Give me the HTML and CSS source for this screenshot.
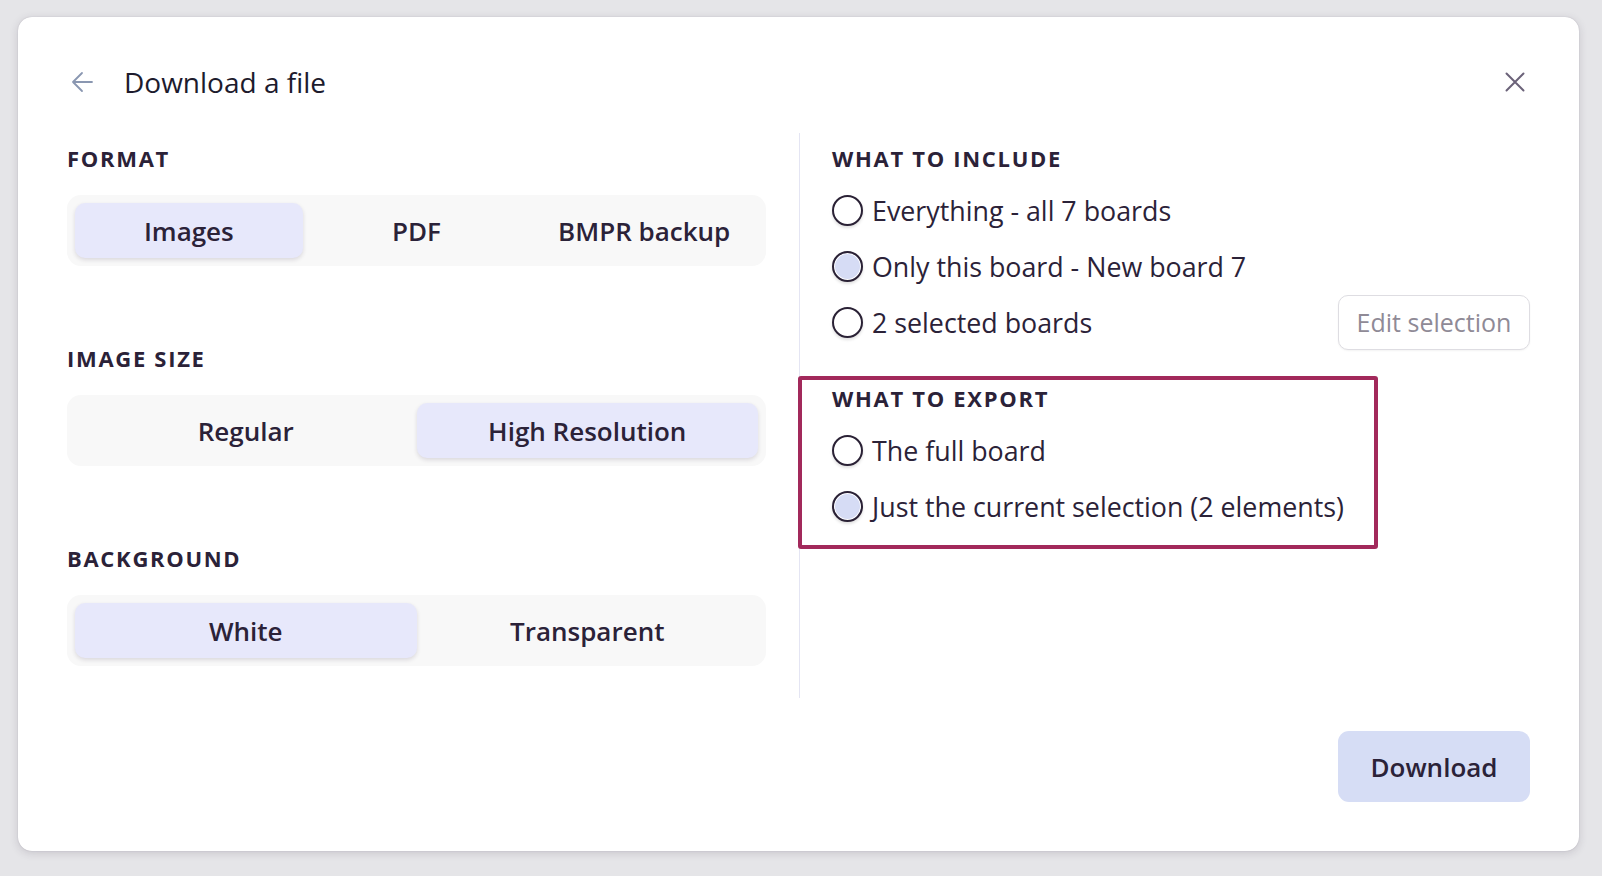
FILE: index.html
```html
<!DOCTYPE html>
<html lang="en">
<head>
<meta charset="utf-8">
<title>Download a file</title>
<link rel="stylesheet" href="styles.css">
</head>
<body>
<div class="dialog">
  <header class="dialog-header">
    <button class="icon-btn back" aria-label="Back">
      <svg width="22" height="22" viewBox="0 0 22 22" fill="none" stroke="currentColor" stroke-width="1.8" stroke-linecap="round" stroke-linejoin="round"><path d="M21 11H2M11 2L2 11l9 9"/></svg>
    </button>
    <h1 class="title">Download a file</h1>
    <button class="icon-btn close" aria-label="Close">
      <svg width="20" height="20" viewBox="0 0 20 20" fill="none" stroke="currentColor" stroke-width="2" stroke-linecap="round"><path d="M1.5 1.5l17 17M18.5 1.5l-17 17"/></svg>
    </button>
  </header>

  <div class="dialog-body">
    <div class="column">
      <section class="group">
        <h2 class="label">Format</h2>
        <div class="segmented three">
          <button class="seg active">Images</button>
          <button class="seg">PDF</button>
          <button class="seg">BMPR backup</button>
        </div>
      </section>
      <section class="group">
        <h2 class="label">Image size</h2>
        <div class="segmented two">
          <button class="seg">Regular</button>
          <button class="seg active">High Resolution</button>
        </div>
      </section>
      <section class="group">
        <h2 class="label">Background</h2>
        <div class="segmented two">
          <button class="seg active">White</button>
          <button class="seg">Transparent</button>
        </div>
      </section>
    </div>

    <div class="divider"></div>

    <div class="column">
      <section class="options">
        <h2 class="label">What to include</h2>
        <label class="radio-row"><span class="radio"></span><span>Everything - all 7 boards</span></label>
        <label class="radio-row"><span class="radio checked"></span><span>Only this board - New board 7</span></label>
        <div class="radio-row">
          <label class="radio-label"><span class="radio"></span><span>2 selected boards</span></label>
          <button class="ghost-btn">Edit selection</button>
        </div>
      </section>
      <section class="options export">
        <div class="highlight"></div>
        <h2 class="label">What to export</h2>
        <label class="radio-row"><span class="radio"></span><span>The full board</span></label>
        <label class="radio-row"><span class="radio checked"></span><span>Just the current selection (2 elements)</span></label>
      </section>
    </div>
  </div>

  <footer class="dialog-footer">
    <button class="primary-btn">Download</button>
  </footer>
</div>
</body>
</html>
```

FILE: styles.css
```css
* { box-sizing: border-box; }

html, body {
  margin: 0;
  padding: 0;
}

body {
  background: #e5e5e8;
  font-family: "Open Sans", "Noto Sans", sans-serif;
  color: #2b2238;
  width: 1602px;
  height: 876px;
  padding: 17px 23px 25px 18px;
}

button {
  font-family: inherit;
  color: inherit;
  border: none;
  background: none;
  padding: 0;
  cursor: pointer;
}

.dialog {
  width: 1561px;
  height: 834px;
  background: #ffffff;
  border-radius: 14px;
  box-shadow: 0 2px 8px rgba(60, 50, 70, 0.18), 0 0 1px rgba(60, 50, 70, 0.3);
  padding: 45px 49px 49px 49px;
  display: flex;
  flex-direction: column;
}

/* header */
.dialog-header {
  display: flex;
  align-items: center;
  height: 40px;
}

.icon-btn {
  display: flex;
  align-items: center;
  justify-content: center;
}

.back {
  color: #8a97b1;
  margin-left: 4px;
  width: 22px;
  height: 22px;
}

.close {
  color: #6b6279;
  margin-left: auto;
  margin-right: 5px;
  width: 20px;
  height: 20px;
}

.title {
  margin: 0 0 0 31px;
  font-size: 28px;
  font-weight: 500;
  color: #1d1b2d;
}

/* body */
.dialog-body {
  margin-top: 31px;
  display: grid;
  grid-template-columns: 699px 1px 698px;
  column-gap: 32.5px;
  height: 565px;
}

.divider {
  background: #e4e5f3;
  width: 1px;
}

.column {
  padding-top: 11px;
  display: flex;
  flex-direction: column;
}

.label {
  margin: 0;
  font-size: 22px;
  line-height: 28px;
  font-weight: 700;
  letter-spacing: 1.7px;
  text-transform: uppercase;
  color: #2b2238;
}

/* segmented controls */
.group {
  margin-bottom: 78px;
}

.group:last-child {
  margin-bottom: 0;
}

.group .label {
  margin-bottom: 23px;
}

.segmented {
  display: grid;
  background: #f8f8f8;
  border-radius: 14px;
  padding: 8px;
  height: 71px;
}

.segmented.three { grid-template-columns: repeat(3, 1fr); }
.segmented.two { grid-template-columns: repeat(2, 1fr); }

.seg {
  font-size: 26px;
  font-weight: 600;
  border-radius: 10px;
  color: #2b2238;
}

.seg.active {
  background: #e7e8fb;
  box-shadow: 0 2px 4px rgba(40, 30, 60, 0.14);
}

/* radio lists */
.options .label {
  margin-bottom: 16px;
}

.radio-row {
  display: flex;
  align-items: center;
  gap: 9px;
  height: 44px;
  margin-bottom: 12px;
  font-size: 26.8px;
  color: #2b2238;
}

.radio-label {
  display: flex;
  align-items: center;
  gap: 9px;
}

.radio {
  width: 31px;
  height: 31px;
  border-radius: 50%;
  border: 2.5px solid #2a2135;
  background: #ffffff;
  box-shadow: 0 2px 3px rgba(0, 0, 0, 0.12);
  flex: none;
}

.radio.checked {
  background: #d6dcf5;
  box-shadow: inset 0 0 0 1px #ffffff, 0 2px 3px rgba(0, 0, 0, 0.12);
}

.ghost-btn {
  margin-left: auto;
  height: 55px;
  width: 192px;
  border: 1.5px solid #dedde2;
  border-radius: 10px;
  font-size: 25px;
  color: #8f8a96;
  background: #ffffff;
  box-shadow: 0 1px 2px rgba(0, 0, 0, 0.05);
}

.export {
  position: relative;
  margin-top: 28px;
}

.highlight {
  position: absolute;
  left: -34px;
  top: -8px;
  width: 580px;
  height: 173px;
  border: 4.5px solid #a2295b;
  border-radius: 3px;
  pointer-events: none;
}

/* footer */
.dialog-footer {
  margin-top: auto;
  display: flex;
  justify-content: flex-end;
}

.primary-btn {
  width: 192px;
  height: 71px;
  border-radius: 11px;
  background: #d6ddf5;
  font-size: 26px;
  font-weight: 600;
  color: #2b2238;
}
```
